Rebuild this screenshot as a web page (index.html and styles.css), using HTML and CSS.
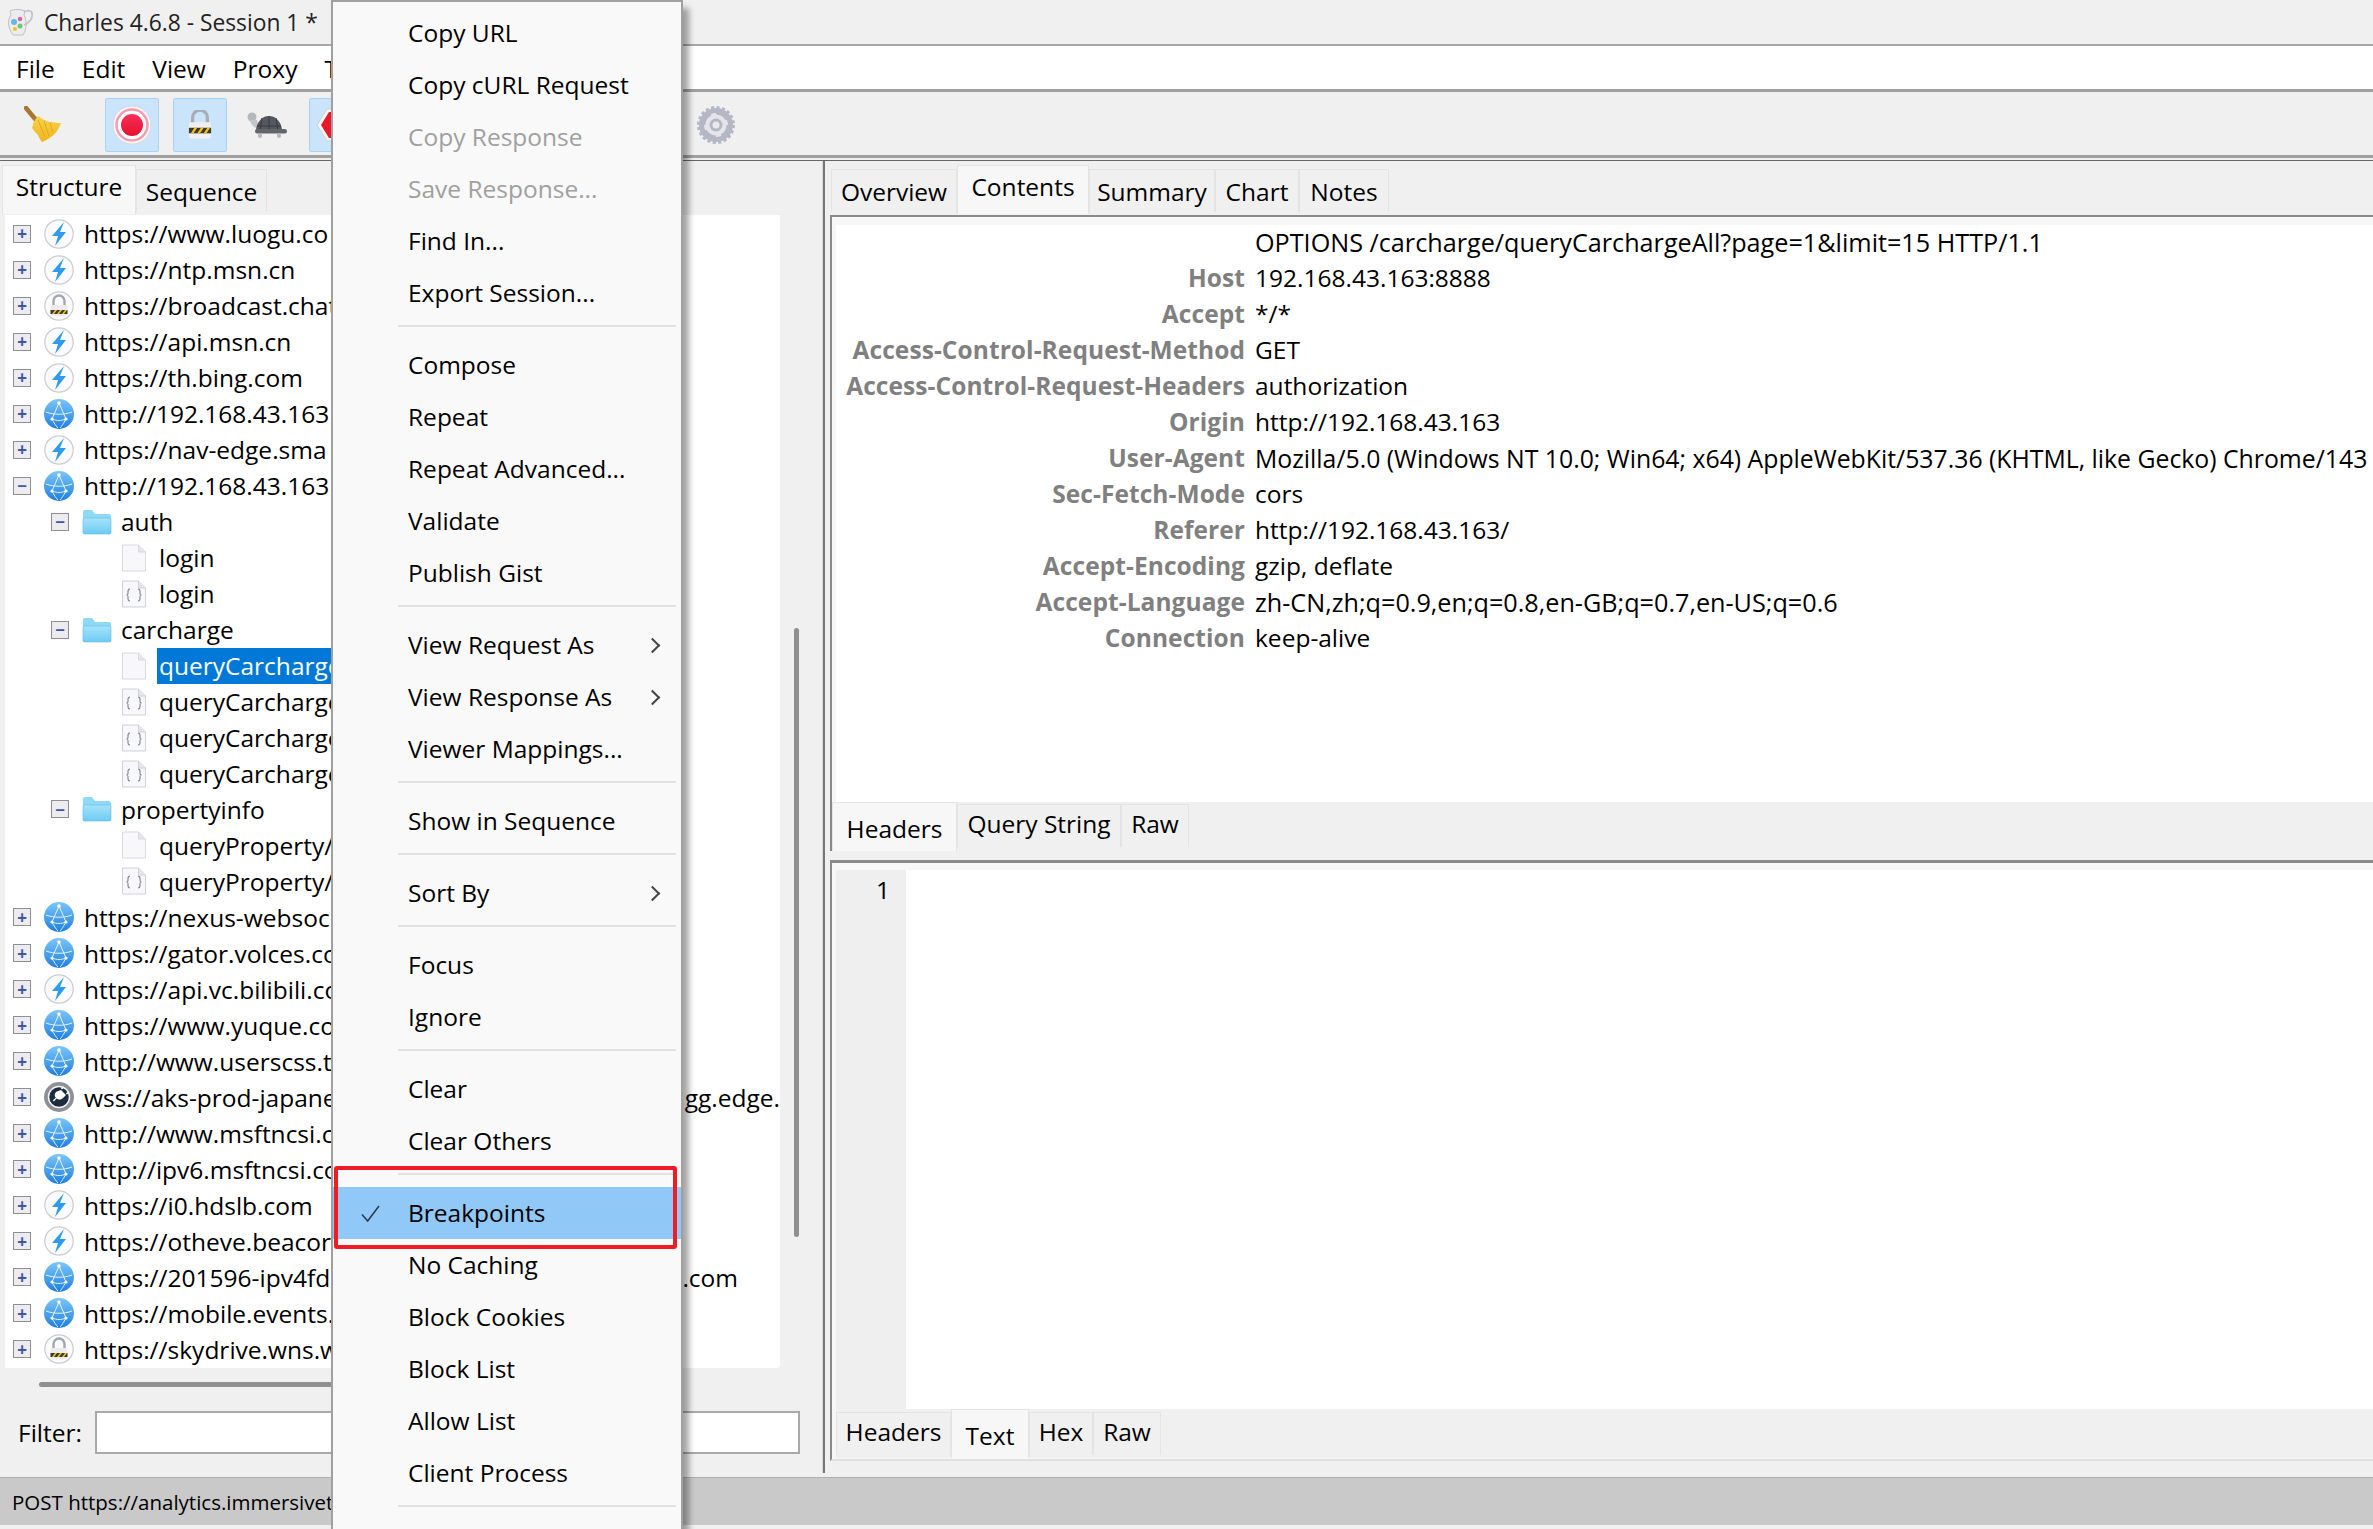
FILE: index.html
```html
<!DOCTYPE html>
<html lang="en">
<head>
    <meta charset="UTF-8">
    <title>Charles 4.6.8 - Session 1 *</title>
    <link rel="stylesheet" href="styles.css">
</head>
<body>
    <svg class="icon-defs" width="0" height="0">
        <defs>
            <linearGradient id="globeFill" x1="0" y1="0" x2="0" y2="1">
                <stop offset="0" stop-color="#7cc6f7"/>
                <stop offset="1" stop-color="#1f7fe0"/>
            </linearGradient>
            <linearGradient id="folderFill" x1="0" y1="0" x2="0" y2="1">
                <stop offset="0" stop-color="#a6e3fb"/>
                <stop offset="1" stop-color="#6ccbf2"/>
            </linearGradient>
            <linearGradient id="recordFill" x1="0" y1="0" x2="0" y2="1">
                <stop offset="0" stop-color="#f5305a"/>
                <stop offset="1" stop-color="#e8102c"/>
            </linearGradient>
            <linearGradient id="broomFill" x1="0" y1="0" x2="0" y2="1">
                <stop offset="0" stop-color="#f8d24a"/>
                <stop offset="1" stop-color="#efb61e"/>
            </linearGradient>
            <symbol id="i-bolt" viewBox="0 0 30 30">
                <circle cx="15" cy="15" r="14.2" fill="#fbfbfd" stroke="#c9ccd2" stroke-width="1.2"/>
                <path d="M20 3 8 17h6l-3 10 11-14h-6z" fill="#2f9bef"/>
            </symbol>
            <symbol id="i-globe" viewBox="0 0 30 30">
                <circle cx="15" cy="15" r="15" fill="url(#globeFill)"/>
                <g fill="none" stroke="#e4f3ff" stroke-width="1">
                    <path d="M15 4 8 20M15 4l7 16M8 20c5 2 9 2 14 0M2 13c8 3 18 3 26 0M22 20c-3 5-4 7-6 9M8 20c2 4 4 7 6 9"/>
                </g>
                <circle cx="15" cy="4" r="1.8" fill="#fff"/>
                <circle cx="8" cy="20" r="1.6" fill="#fff"/>
                <circle cx="22" cy="20" r="1.6" fill="#fff"/>
            </symbol>
            <symbol id="i-lock" viewBox="0 0 30 30">
                <circle cx="15" cy="15" r="14.2" fill="#fbfbfd" stroke="#c9ccd2" stroke-width="1.2"/>
                <path d="M9.500 15V10a5.500 5.500 0 0 1 11 0v5" fill="none" stroke="#a4a7b2" stroke-width="2.400"/>
                <rect x="6.500" y="14" width="17" height="11" rx="2" fill="#ececec"/>
                <rect x="6.500" y="19" width="17" height="4" fill="#3a3a34"/>
                <path d="M8 23l3-4h2l-3 4zM13 23l3-4h2l-3 4zM18 23l3-4h2l-3 4z" fill="#f2c21b"/>
            </symbol>
            <symbol id="i-socket" viewBox="0 0 30 30">
                <circle cx="15" cy="15" r="15" fill="#8e9097"/>
                <circle cx="15" cy="15" r="10.500" fill="#1f2c3e" stroke="#f4f4f4" stroke-width="1.500"/>
                <path d="M17 8l5 5-3 3c-2 2-5 2-6.500.500l-2.500 3-1.200-1.200 3-2.500c-1.500-1.500-1.500-4 .5-6z" fill="#fff"/>
                <path d="M17.500 7l2-2M22.500 12l2-2" stroke="#fff" stroke-width="1.500"/>
            </symbol>
            <symbol id="i-folder" viewBox="0 0 30 26">
                <path d="M1 3a2 2 0 0 1 2-2h7l3 4h14a2 2 0 0 1 2 2v16a2 2 0 0 1-2 2H3a2 2 0 0 1-2-2z" fill="#8fd9f8"/>
                <rect x="1" y="9" width="28" height="16" rx="1.500" fill="url(#folderFill)" stroke="#5fbce4" stroke-width=".6"/>
            </symbol>
            <symbol id="i-file" viewBox="0 0 24 28">
                <path d="M.5 1h16l7 7v19H.5z" fill="#f8f8fa" stroke="#d8dae0"/>
                <path d="M16.500 1v7h7" fill="#e4e6ea" stroke="#d8dae0"/>
            </symbol>
            <symbol id="i-json" viewBox="0 0 24 28">
                <path d="M.5 1h16l7 7v19H.5z" fill="#f8f8fa" stroke="#d0d2d8"/>
                <path d="M16.500 1v7h7" fill="#e4e6ea" stroke="#d0d2d8"/>
                <path d="M8 9c-2 0-2 1-2 2.500v2c0 1-.5 1.500-1.500 1.500 1 0 1.500.5 1.500 1.500v2c0 1.500 0 2.500 2 2.500M16 9c2 0 2 1 2 2.500v2c0 1 .5 1.500 1.500 1.500-1 0-1.500.5-1.500 1.500v2c0 1.500 0 2.500-2 2.500" fill="none" stroke="#7d8290" stroke-width="1.100"/>
            </symbol>
        </defs>
    </svg>

    <div class="app">
        <div class="title-bar">
            <svg class="jug" viewBox="0 0 27 28">
                <path d="M4 3c4-2 10-2 15 0l-1 4c3 6 3 14-1 20H7C2 20 1 12 5 7z" fill="#ececee" stroke="#c0c0c4"/>
                <path d="M18 4c5-3 9-1 8 4 0 4-4 7-8 9" fill="none" stroke="#c4c4c8" stroke-width="1.800"/>
                <circle cx="8" cy="14" r="3" fill="#62b6e8"/>
                <circle cx="14" cy="11" r="2.200" fill="#e05a9c"/>
                <circle cx="14" cy="18" r="2.500" fill="#6cc97a"/>
                <circle cx="9" cy="21" r="2" fill="#f2c21b"/>
            </svg>
            <span>Charles 4.6.8 - Session 1 *</span>
        </div>

        <div class="menu-bar">
            <span>File</span>
            <span>Edit</span>
            <span>View</span>
            <span>Proxy</span>
            <span>T</span>
        </div>

        <div class="tool-bar">
            <svg class="tool broom" viewBox="0 0 37 37">
                <path d="M2 2l10 12" stroke="#a8762e" stroke-width="4.500" fill="none" stroke-linecap="round"/>
                <path d="M8 22C9 17 11 13 14 10c6 5 14 7 23 7-3 9-9 15-19 19-2-2-3-5-4-7-2-2-4-4-6-7z" fill="url(#broomFill)"/>
                <path d="M14 14l7 17M20 15l5 15M26 17l3 9" stroke="#e3a91a" fill="none"/>
            </svg>
            <div class="tool-btn on first">
                <svg width="40" height="40" viewBox="0 0 40 40">
                    <circle cx="20" cy="20" r="19" fill="#f8f8f8" stroke="#d8d8dc"/>
                    <circle cx="20" cy="20" r="15.500" fill="#fff" stroke="#f49bae" stroke-width="2.500"/>
                    <circle cx="20" cy="20" r="11" fill="url(#recordFill)"/>
                </svg>
            </div>
            <div class="tool-btn on">
                <svg width="24" height="30" viewBox="0 0 26 32">
                    <path d="M5 14V8a8 8 0 0 1 16 0v6" fill="none" stroke="#a9acb6" stroke-width="3.500"/>
                    <rect x="1" y="13" width="24" height="18" rx="3" fill="#f0f0f0"/>
                    <rect x="1" y="19" width="24" height="6" fill="#3a3a34"/>
                    <path d="M3 25l4-6h3l-4 6zM10 25l4-6h3l-4 6zM17 25l4-6h3l-4 6z" fill="#f2c21b"/>
                </svg>
            </div>
            <svg class="tool turtle" viewBox="0 0 40 28">
                <circle cx="5" cy="6" r="4.500" fill="#b5b8bd"/>
                <path d="M3 9c1 5 4 8 9 9l-2-9z" fill="#c3c6ca"/>
                <path d="M9 20a13 15 0 0 1 26 0z" fill="#55595f"/>
                <path d="M22 5v15M15 7l-2 13M29 7l2 13M10 15h24" stroke="#383b40" fill="none"/>
                <rect x="8" y="18" width="32" height="4.500" rx="2.200" fill="#62656a"/>
                <rect x="11" y="22" width="4" height="5" rx="2" fill="#b5b8bd"/>
                <rect x="30" y="22" width="4" height="5" rx="2" fill="#b5b8bd"/>
            </svg>
            <div class="tool-btn on">
                <svg width="40" height="34" viewBox="0 0 40 34">
                    <path d="M1 17 11 1h18l10 16-10 16H11z" fill="#f4f4f4" stroke="#d0d0d0"/>
                    <path d="M5 17 13 4h14l8 13-8 13H13z" fill="#e8172c"/>
                    <path d="M16 17l4-4 4 4-4 4z" fill="#fff"/>
                </svg>
            </div>
            <svg class="gear" viewBox="0 0 40 40">
                <circle cx="20" cy="20" r="17" fill="#b4b8c4" stroke="#b4b8c4" stroke-width="4" stroke-dasharray="3 2.340"/>
                <circle cx="20" cy="20" r="12" fill="#e4e5ea"/>
                <circle cx="20" cy="20" r="12" fill="none" stroke="#b4b8c4" stroke-width="3" stroke-dasharray="13 5.800"/>
                <circle cx="20" cy="20" r="6.500" fill="#b4b8c4"/>
                <circle cx="20" cy="20" r="3.500" fill="#e8e9ee"/>
            </svg>
        </div>

        <div class="main">
            <div class="left-pane">
                <div class="tabs left-tabs">
                    <div class="tab active">Structure</div>
                    <div class="tab">Sequence</div>
                </div>
                <div class="tree-wrap">
                    <div class="tree">
                        <div class="row"><i class="box">+</i><svg class="ico"><use href="#i-bolt"/></svg><span>https://www.luogu.co</span></div>
                        <div class="row"><i class="box">+</i><svg class="ico"><use href="#i-bolt"/></svg><span>https://ntp.msn.cn</span></div>
                        <div class="row"><i class="box">+</i><svg class="ico"><use href="#i-lock"/></svg><span>https://broadcast.chat</span></div>
                        <div class="row"><i class="box">+</i><svg class="ico"><use href="#i-bolt"/></svg><span>https://api.msn.cn</span></div>
                        <div class="row"><i class="box">+</i><svg class="ico"><use href="#i-bolt"/></svg><span>https://th.bing.com</span></div>
                        <div class="row"><i class="box">+</i><svg class="ico"><use href="#i-globe"/></svg><span>http://192.168.43.163</span></div>
                        <div class="row"><i class="box">+</i><svg class="ico"><use href="#i-bolt"/></svg><span>https://nav-edge.sma</span></div>
                        <div class="row"><i class="box">&minus;</i><svg class="ico"><use href="#i-globe"/></svg><span>http://192.168.43.163</span></div>
                        <div class="row lvl2"><i class="box">&minus;</i><svg class="ico folder"><use href="#i-folder"/></svg><span>auth</span></div>
                        <div class="row lvl3"><svg class="ico file"><use href="#i-file"/></svg><span>login</span></div>
                        <div class="row lvl3"><svg class="ico file"><use href="#i-json"/></svg><span>login</span></div>
                        <div class="row lvl2"><i class="box">&minus;</i><svg class="ico folder"><use href="#i-folder"/></svg><span>carcharge</span></div>
                        <div class="row lvl3"><svg class="ico file"><use href="#i-file"/></svg><span class="selected">queryCarcharge</span></div>
                        <div class="row lvl3"><svg class="ico file"><use href="#i-json"/></svg><span>queryCarcharge</span></div>
                        <div class="row lvl3"><svg class="ico file"><use href="#i-json"/></svg><span>queryCarcharge</span></div>
                        <div class="row lvl3"><svg class="ico file"><use href="#i-json"/></svg><span>queryCarcharge</span></div>
                        <div class="row lvl2"><i class="box">&minus;</i><svg class="ico folder"><use href="#i-folder"/></svg><span>propertyinfo</span></div>
                        <div class="row lvl3"><svg class="ico file"><use href="#i-file"/></svg><span>queryProperty/</span></div>
                        <div class="row lvl3"><svg class="ico file"><use href="#i-json"/></svg><span>queryProperty/</span></div>
                        <div class="row"><i class="box">+</i><svg class="ico"><use href="#i-globe"/></svg><span>https://nexus-websoc</span></div>
                        <div class="row"><i class="box">+</i><svg class="ico"><use href="#i-globe"/></svg><span>https://gator.volces.co</span></div>
                        <div class="row"><i class="box">+</i><svg class="ico"><use href="#i-bolt"/></svg><span>https://api.vc.bilibili.co</span></div>
                        <div class="row"><i class="box">+</i><svg class="ico"><use href="#i-globe"/></svg><span>https://www.yuque.co</span></div>
                        <div class="row"><i class="box">+</i><svg class="ico"><use href="#i-globe"/></svg><span>http://www.userscss.t</span></div>
                        <div class="row"><i class="box">+</i><svg class="ico"><use href="#i-socket"/></svg><span>wss://aks-prod-japane</span><span class="tail">gg.edge.</span></div>
                        <div class="row"><i class="box">+</i><svg class="ico"><use href="#i-globe"/></svg><span>http://www.msftncsi.c</span></div>
                        <div class="row"><i class="box">+</i><svg class="ico"><use href="#i-globe"/></svg><span>http://ipv6.msftncsi.co</span></div>
                        <div class="row"><i class="box">+</i><svg class="ico"><use href="#i-bolt"/></svg><span>https://i0.hdslb.com</span></div>
                        <div class="row"><i class="box">+</i><svg class="ico"><use href="#i-bolt"/></svg><span>https://otheve.beacor</span></div>
                        <div class="row"><i class="box">+</i><svg class="ico"><use href="#i-globe"/></svg><span>https://201596-ipv4fd</span><span class="tail short">t.com</span></div>
                        <div class="row"><i class="box">+</i><svg class="ico"><use href="#i-globe"/></svg><span>https://mobile.events.</span></div>
                        <div class="row"><i class="box">+</i><svg class="ico"><use href="#i-lock"/></svg><span>https://skydrive.wns.w</span></div>
                    </div>
                    <div class="v-scroll"><div class="v-thumb"></div></div>
                </div>
                <div class="h-scroll"><div class="h-thumb"></div></div>
                <div class="filter">
                    <label>Filter:</label>
                    <div class="filter-input"></div>
                </div>
            </div>

            <div class="right-pane">
                <div class="tabs top-tabs">
                    <div class="tab">Overview</div>
                    <div class="tab active">Contents</div>
                    <div class="tab">Summary</div>
                    <div class="tab">Chart</div>
                    <div class="tab">Notes</div>
                </div>
                <div class="frame req-frame">
                    <div class="headers">
                        <div class="hdr"><b></b><span class="wide">OPTIONS /carcharge/queryCarchargeAll?page=1&amp;limit=15 HTTP/1.1</span></div>
                        <div class="hdr"><b>Host</b><span>192.168.43.163:8888</span></div>
                        <div class="hdr"><b>Accept</b><span>*/*</span></div>
                        <div class="hdr"><b>Access-Control-Request-Method</b><span>GET</span></div>
                        <div class="hdr"><b>Access-Control-Request-Headers</b><span>authorization</span></div>
                        <div class="hdr"><b>Origin</b><span>http://192.168.43.163</span></div>
                        <div class="hdr"><b>User-Agent</b><span class="agent">Mozilla/5.0 (Windows NT 10.0; Win64; x64) AppleWebKit/537.36 (KHTML, like Gecko) Chrome/143</span></div>
                        <div class="hdr"><b>Sec-Fetch-Mode</b><span>cors</span></div>
                        <div class="hdr"><b>Referer</b><span>http://192.168.43.163/</span></div>
                        <div class="hdr"><b>Accept-Encoding</b><span>gzip, deflate</span></div>
                        <div class="hdr"><b>Accept-Language</b><span class="wide">zh-CN,zh;q=0.9,en;q=0.8,en-GB;q=0.7,en-US;q=0.6</span></div>
                        <div class="hdr"><b>Connection</b><span>keep-alive</span></div>
                    </div>
                    <div class="tabs sub-tabs">
                        <div class="tab active">Headers</div>
                        <div class="tab">Query String</div>
                        <div class="tab">Raw</div>
                    </div>
                </div>
                <div class="frame body-frame">
                    <div class="editor">
                        <div class="gutter">1</div>
                        <div class="code"></div>
                    </div>
                    <div class="tabs bottom-tabs">
                        <div class="tab">Headers</div>
                        <div class="tab active">Text</div>
                        <div class="tab">Hex</div>
                        <div class="tab">Raw</div>
                    </div>
                </div>
            </div>
        </div>

        <div class="status-bar">POST https://analytics.immersivet</div>
    </div>

    <div class="context-menu">
        <div class="item">Copy URL</div>
        <div class="item">Copy cURL Request</div>
        <div class="item disabled">Copy Response</div>
        <div class="item disabled">Save Response...</div>
        <div class="item">Find In...</div>
        <div class="item">Export Session...</div>
        <div class="sep"></div>
        <div class="item">Compose</div>
        <div class="item">Repeat</div>
        <div class="item">Repeat Advanced...</div>
        <div class="item">Validate</div>
        <div class="item">Publish Gist</div>
        <div class="sep"></div>
        <div class="item more">View Request As</div>
        <div class="item more">View Response As</div>
        <div class="item">Viewer Mappings...</div>
        <div class="sep"></div>
        <div class="item">Show in Sequence</div>
        <div class="sep"></div>
        <div class="item more">Sort By</div>
        <div class="sep"></div>
        <div class="item">Focus</div>
        <div class="item">Ignore</div>
        <div class="sep"></div>
        <div class="item">Clear</div>
        <div class="item">Clear Others</div>
        <div class="sep"></div>
        <div class="item checked">
            <svg class="check" viewBox="0 0 20 18"><path d="M1 10l6 7L19 1" fill="none" stroke="#2a3a4a" stroke-width="1.600"/></svg>
            Breakpoints
        </div>
        <div class="item">No Caching</div>
        <div class="item">Block Cookies</div>
        <div class="item">Block List</div>
        <div class="item">Allow List</div>
        <div class="item">Client Process</div>
        <div class="sep"></div>
    </div>
    <div class="red-mark"></div>
</body>
</html>
```

FILE: styles.css
```css
* {
    box-sizing: border-box;
}
html, body {
    margin: 0;
    padding: 0;
    overflow: hidden;
}
body {
    width: 2373px;
    height: 1529px;
    font-family: "Open Sans", "Noto Sans", sans-serif;
    font-size: 24.5px;
    color: #000;
    background-color: #f0f0f0;
}
.icon-defs {
    position: absolute;
}
.app {
    display: flex;
    flex-direction: column;
    height: 1529px;
}

/* window chrome */
.title-bar {
    height: 46px;
    display: flex;
    align-items: center;
    padding-left: 6px;
    font-size: 22.8px;
    background-color: #f0f0f0;
    border-bottom: 2px solid #a8a8a8;
    color: #222;
}
.jug {
    width: 27px;
    height: 28px;
    margin-right: 11px;
}
.menu-bar {
    height: 46px;
    display: flex;
    align-items: center;
    padding: 2px 0 0 16px;
    gap: 27px;
    background-color: #fff;
    border-bottom: 3px solid #a0a0a0;
}
.tool-bar {
    height: 64px;
    display: flex;
    align-items: center;
    margin-top: 2px;
    padding-left: 24px;
    background-color: #f0f0f0;
    border-bottom: 3px solid #a0a0a0;
}
.broom {
    width: 37px;
    height: 37px;
    margin-right: -1px;
}
.tool-btn {
    width: 54px;
    height: 54px;
    display: flex;
    align-items: center;
    justify-content: center;
    background-color: #c9e4fb;
    border: 1px solid #a9d3f5;
    border-radius: 2px;
    margin-right: 14px;
}
.tool-btn.first {
    margin-left: 45px;
}
.turtle {
    width: 40px;
    height: 28px;
    margin: 0 22px 0 6px;
}
.gear {
    width: 40px;
    height: 40px;
    margin-left: 319px;
}

/* panes */
.main {
    flex: 1;
    display: flex;
    border-top: 1px solid #666;
    margin-top: 2px;
    min-height: 0;
}
.left-pane {
    width: 823px;
    padding-top: 4px;
    border-right: 1px solid #d8d8d8;
    display: flex;
    flex-direction: column;
}
.right-pane {
    flex: 1;
    min-width: 0;
    border-left: 2px solid #777;
    padding: 4px 0 0 5px;
    display: flex;
    flex-direction: column;
}
.tabs {
    display: flex;
    align-items: flex-start;
}
.tab {
    height: 43px;
    margin-top: 4px;
    padding: 0 6px;
    display: flex;
    align-items: center;
    justify-content: center;
    background-color: #f0f0f0;
    border: 1px solid #e4e4e4;
    border-bottom: 0;
    white-space: nowrap;
}
.tab.active {
    height: 49px;
    margin-top: 0;
    padding-bottom: 8px;
    background-color: #f7f7f7;
}
.left-tabs {
    height: 50px;
    margin-left: 2px;
}
.left-tabs .tab:nth-child(1) { width: 134px; }
.left-tabs .tab:nth-child(2) { width: 131px; }
.tree-wrap {
    height: 1153px;
    display: flex;
}
.tree {
    width: 775px;
    margin-left: 5px;
    background-color: #fff;
    overflow: hidden;
    border-bottom-right-radius: 3px;
}
.row {
    height: 35.97px;
    display: flex;
    align-items: center;
    padding-left: 8px;
    white-space: nowrap;
}
.tree .row:first-child {
    margin-top: 1px;
}
.box {
    width: 18px;
    height: 18px;
    flex: none;
    margin-right: 13px;
    display: flex;
    align-items: center;
    justify-content: center;
    font-style: normal;
    font-weight: 700;
    font-size: 17px;
    line-height: 1;
    color: #3e55a8;
    background-color: #ececf0;
    border: 1px solid #8f8f8f;
}
.ico {
    width: 30px;
    height: 30px;
    flex: none;
    margin-right: 10px;
}
.row.lvl2 {
    padding-left: 46px;
}
.row.lvl2 .ico {
    height: 26px;
    margin-right: 9px;
}
.row.lvl3 {
    padding-left: 117px;
}
.row.lvl3 .ico {
    width: 24px;
    height: 28px;
    margin-right: 13px;
}
.selected {
    color: #fff;
    background-color: #0078d7;
    padding: 0 2px;
    margin-left: -2px;
    height: 36px;
    line-height: 35px;
}
.tail {
    margin-left: auto;
}
.tail.short {
    margin-right: 42px;
}
.v-scroll {
    width: 35px;
}
.v-thumb {
    width: 5px;
    height: 609px;
    margin: 413px 0 0 14px;
    background-color: #8f8f8f;
    border-radius: 3px;
}
.h-scroll {
    height: 43px;
    padding: 14px 0 0 39px;
}
.h-thumb {
    width: 500px;
    height: 5px;
    background-color: #8f8f8f;
    border-radius: 3px;
}
.filter {
    height: 43px;
    display: flex;
    align-items: center;
    padding-left: 18px;
}
.filter label {
    width: 77px;
}
.filter-input {
    width: 705px;
    height: 43px;
    background-color: #fff;
    border: 2px solid #a9a9a9;
}

/* right side */
.top-tabs {
    height: 50px;
    padding-left: 1px;
}
.top-tabs .tab:nth-child(1) { width: 126px; }
.top-tabs .tab:nth-child(2) { width: 132px; }
.top-tabs .tab:nth-child(3) { width: 126px; }
.top-tabs .tab:nth-child(4) { width: 84px; }
.top-tabs .tab:nth-child(5) { width: 90px; }
.frame {
    border-left: 2px solid #8a8a8a;
    border-top: 2px solid #8a8a8a;
    padding-left: 4px;
    background-color: #f7f7f7;
}
.req-frame {
    height: 636px;
    padding-top: 8px;
}
.headers {
    height: 577px;
    background-color: #fff;
}
.hdr {
    height: 36px;
    padding-bottom: 3px;
    display: flex;
    align-items: center;
    white-space: nowrap;
    overflow: hidden;
}
.hdr b {
    width: 409px;
    flex: none;
    text-align: right;
    font-weight: 700;
    letter-spacing: 0.07px;
    color: #808080;
}
.hdr span {
    margin-left: 10px;
}
.hdr .wide {
    font-size: 25.2px;
}
.hdr .agent {
    font-size: 24.8px;
}
.sub-tabs {
    height: 49px;
    background-color: #f0f0f0;
}
.sub-tabs .tab {
    height: 43px;
    margin-top: 2px;
    padding-bottom: 5px;
}
.sub-tabs .tab.active {
    height: 49px;
    margin: 0 0 0 -4px;
    padding: 2px 0 0;
    background-color: #f7f7f7;
}
.sub-tabs .tab:nth-child(1) { width: 125px; }
.sub-tabs .tab:nth-child(2) { width: 164px; }
.sub-tabs .tab:nth-child(3) { width: 68px; }
.body-frame {
    margin-top: 9px;
    height: 601px;
    border-top-width: 3px;
    padding-top: 7px;
    border-bottom: 2px solid #e0e0e0;
}
.editor {
    height: 539px;
    display: flex;
}
.gutter {
    width: 70px;
    padding: 3px 16px 0 0;
    text-align: right;
    background-color: #efefef;
}
.code {
    flex: 1;
    background-color: #fff;
}
.bottom-tabs {
    height: 49px;
    background-color: #f0f0f0;
}
.bottom-tabs .tab {
    height: 43px;
    margin-top: 3px;
    padding-bottom: 6px;
}
.bottom-tabs .tab.active {
    height: 49px;
    margin: 0;
    padding: 2px 0 0;
    background-color: #f7f7f7;
}
.bottom-tabs .tab:nth-child(1) { width: 115px; }
.bottom-tabs .tab:nth-child(2) { width: 78px; }
.bottom-tabs .tab:nth-child(3) { width: 64px; }
.bottom-tabs .tab:nth-child(4) { width: 68px; }
.status-bar {
    height: 48px;
    margin: 4px 0;
    padding-left: 12px;
    display: flex;
    align-items: center;
    font-size: 20.5px;
    background-color: #c9c9c9;
    border-top: 1px solid #b0b0b0;
}

/* popup over the window */
.context-menu {
    position: absolute;
    left: 331px;
    top: 0;
    width: 352px;
    height: 1529px;
    padding-top: 5px;
    background-color: #f9f9f9;
    border: 2px solid #a0a0a0;
    border-bottom: 0;
    box-shadow: 6px 8px 6px rgba(0, 0, 0, 0.35);
    overflow: hidden;
}
.item {
    height: 52px;
    padding: 0 0 2px 75px;
    display: flex;
    align-items: center;
    position: relative;
}
.item.disabled {
    color: #a0a0a0;
}
.item.more::after {
    content: "";
    position: absolute;
    right: 23px;
    top: 21px;
    width: 9px;
    height: 9px;
    border-top: 2px solid #444;
    border-right: 2px solid #444;
    transform: rotate(45deg);
}
.item.checked {
    background-color: #90c8f8;
}
.check {
    position: absolute;
    left: 28px;
    top: 18px;
    width: 19px;
    height: 17px;
}
.sep {
    height: 20px;
    padding-top: 6px;
    margin: 0 5px 0 65px;
}
.sep::before {
    content: "";
    display: block;
    height: 2px;
    background-color: #e2e2e2;
}
.red-mark {
    position: absolute;
    left: 334px;
    top: 1166px;
    width: 343px;
    height: 83px;
    border: 4px solid #ee1c25;
    border-radius: 3px;
}
```
